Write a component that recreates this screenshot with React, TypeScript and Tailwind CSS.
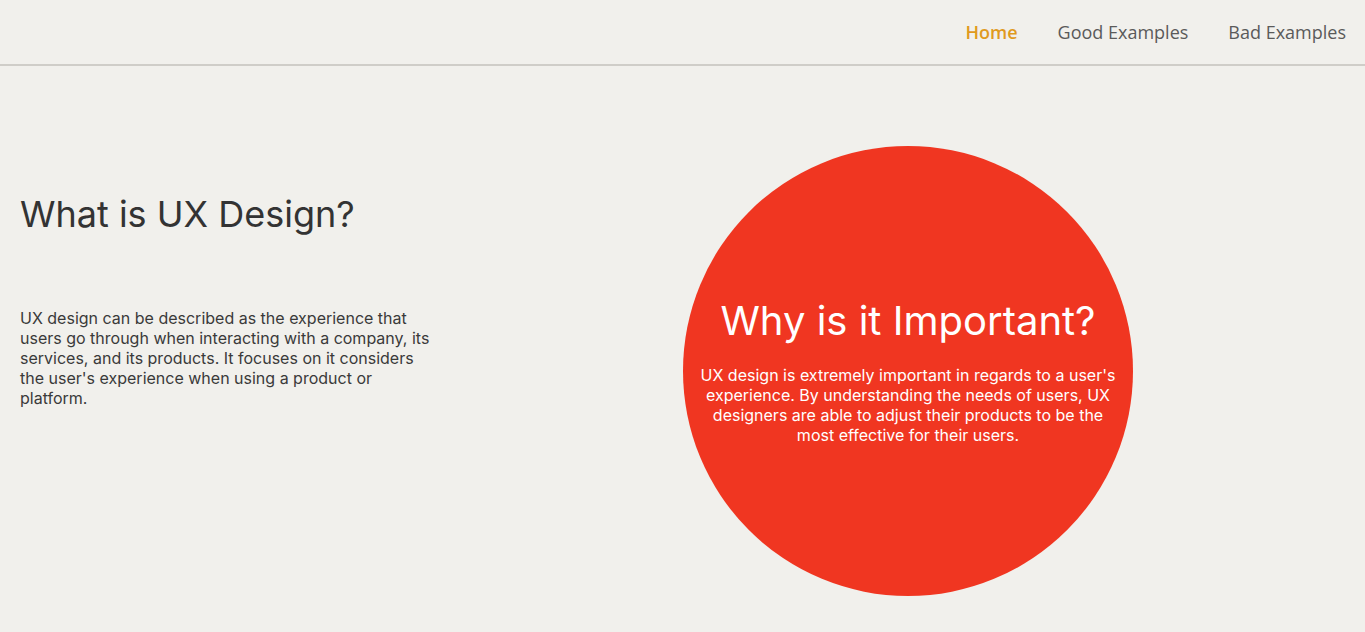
import React from 'react'

const navItems = [
  { label: 'Home', active: true },
  { label: 'Good Examples', active: false },
  { label: 'Bad Examples', active: false },
]

export default function App() {
  return (
    <div className="min-h-[632px] bg-[#f1f0ec] text-[#333333] font-['Inter',sans-serif]">
      <header className="h-[66px] border-b-2 border-[#cfcdc8] flex items-center justify-end pr-[19px]">
        <nav className="flex gap-10 font-['Open_Sans',sans-serif] text-[18px] pt-[1px]">
          {navItems.map(item => (
            <a
              key={item.label}
              href="#"
              className={item.active ? 'text-[#e09a1e] font-semibold' : 'text-[#5a5a5a] hover:text-[#e09a1e]'}
            >
              {item.label}
            </a>
          ))}
        </nav>
      </header>

      <main className="flex">
        <section className="w-[683px] pl-5 pt-[126px]">
          <h1 className="text-[36px] leading-[44px] font-normal">What is UX Design?</h1>
          <p className="mt-[72px] w-[415px] text-[16px] leading-5 text-[#3a3a3a]">
            UX design can be described as the experience that users go through when interacting with a company, its
            services, and its products. It focuses on it considers the user's experience when using a product or
            platform.
          </p>
        </section>

        <section className="pt-[80px]">
          <div className="w-[450px] h-[450px] rounded-full bg-[#f03621] text-white flex flex-col items-center justify-center text-center px-[12px]">
            <h2 className="text-[40px] leading-[48px] font-normal">Why is it Important?</h2>
            <p className="mt-[20px] text-[16px] leading-5">
              UX design is extremely important in regards to a user's experience. By understanding the needs of
              users, UX designers are able to adjust their products to be the most effective for their users.
            </p>
          </div>
        </section>
      </main>
    </div>
  )
}
